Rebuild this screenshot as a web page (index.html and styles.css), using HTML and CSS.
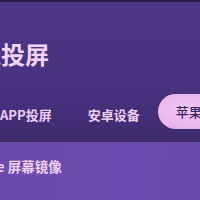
FILE: index.html
```html
<!DOCTYPE html>
<html lang="zh">
<head>
<meta charset="utf-8">
<link rel="stylesheet" href="styles.css">
</head>
<body>
<div class="screen">
  <div class="topbar"></div>
  <h1 class="title">无线投屏</h1>
  <div class="tabs">
    <div class="tab">APP投屏</div>
    <div class="tab">安卓设备</div>
    <div class="tab active">苹果设备</div>
  </div>
  <div class="panel">
    <div class="panel-title">iPhone 屏幕镜像</div>
  </div>
</div>
</body>
</html>
```
FILE: styles.css
```css
html, body {
  margin: 0;
  padding: 0;
}
body {
  width: 200px;
  height: 200px;
  overflow: hidden;
  font-family: "Noto Sans CJK SC", "Noto Sans", sans-serif;
}
.screen {
  width: 200px;
  height: 200px;
  display: flex;
  flex-direction: column;
  background: linear-gradient(180deg, #4c3787 0%, #473280 45%, #3d2b6d 72%);
  overflow: hidden;
}
.topbar {
  height: 2px;
  background: #2a1f4c;
  flex: none;
}
.title {
  margin: 36px 0 0 -47px;
  font-size: 24px;
  line-height: 32px;
  font-weight: 700;
  color: #f3d3f6;
  white-space: nowrap;
}
.tabs {
  display: flex;
  margin: 24px 0 0 -18px;
  white-space: nowrap;
  height: 48px;
  align-items: flex-start;
}
.tab {
  padding: 3px 18px 0;
  font-size: 13px;
  line-height: 35px;
  font-weight: 700;
  color: #efcdf3;
  flex: none;
}
.tab.active {
  padding-top: 0;
  height: 35px;
  border-radius: 18px;
  background: radial-gradient(ellipse at 40% 45%, #f1c9f4 0%, #e7b3ec 70%, #dfa6e6 100%);
  color: #3b2264;
  font-weight: 500;
}
.panel {
  flex: 1;
  background: linear-gradient(100deg, #6a4aa9 0%, #6d4caf 60%, #6a4aab 100%);
  padding-top: 14px;
}
.panel-title {
  margin-left: -42px;
  font-size: 13.5px;
  line-height: 20px;
  font-weight: 700;
  color: #f0cff4;
  white-space: nowrap;
}
```
